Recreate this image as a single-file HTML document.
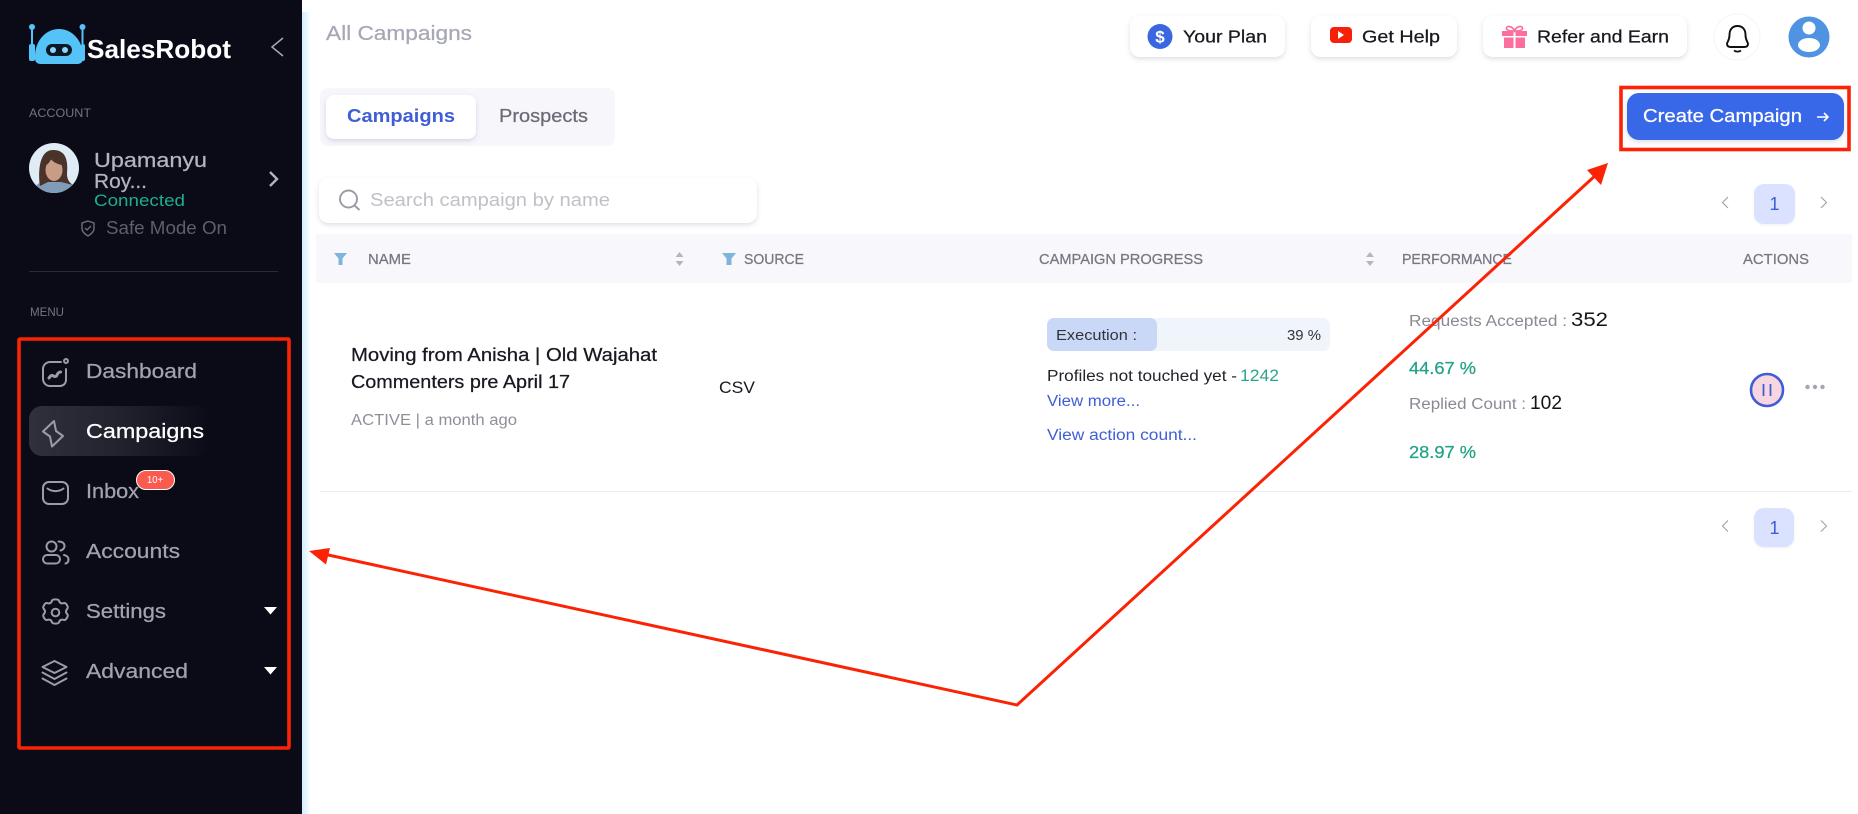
<!DOCTYPE html>
<html lang="en"><head><meta charset="utf-8"><title>SalesRobot - All Campaigns</title>
<style>
html,body{margin:0;padding:0;width:1858px;height:814px;overflow:hidden;background:#fff}
svg{display:block}
text{font-family:"Liberation Sans",sans-serif;white-space:pre}
.m{stroke:currentColor;stroke-width:.25px}
</style></head><body>
<svg xmlns="http://www.w3.org/2000/svg" width="1858" height="814" viewBox="0 0 1858 814">
<defs>
<linearGradient id="strip" x1="0" x2="1" y1="0" y2="0"><stop offset="0" stop-color="#d3eeff"/><stop offset="1" stop-color="#fff"/></linearGradient>
<linearGradient id="act" x1="0" x2="1" y1="0" y2="0"><stop offset="0" stop-color="#30303d"/><stop offset=".45" stop-color="#24242f"/><stop offset="1" stop-color="#0b0b18"/></linearGradient>
<filter id="sh" x="-10%" y="-30%" width="120%" height="170%"><feDropShadow dx="0" dy="2" stdDeviation="2.5" flood-color="#5a5a80" flood-opacity=".2"/></filter>
<filter id="sh2" x="-10%" y="-30%" width="120%" height="170%"><feDropShadow dx="0" dy="1" stdDeviation="1" flood-color="#7a7aa0" flood-opacity=".12"/></filter>
<clipPath id="av"><circle cx="54" cy="168" r="25"/></clipPath>
</defs>
<rect width="1858" height="814" fill="#fff"/>
<rect x="302" y="12" width="9" height="802" fill="url(#strip)"/>
<rect width="302" height="814" fill="#0b0b18"/>

<!-- logo -->
<g fill="#55c3f7">
<path d="M35 56a24 27 0 0 1 48 0v3a5 5 0 0 1-5 5H40a5 5 0 0 1-5-5z"/>
<rect x="29" y="44" width="6" height="17" rx="2"/><rect x="31" y="27" width="2" height="20"/><circle cx="32" cy="27" r="3"/>
<rect x="81" y="44" width="4" height="17" rx="2"/><rect x="81.500" y="27" width="2" height="20"/><circle cx="82.500" cy="27" r="3"/>
</g>
<rect x="46" y="44" width="26" height="12" rx="6" fill="#0d1826"/>
<circle cx="53" cy="50" r="3" fill="#8ad7fb"/><circle cx="65" cy="50" r="3" fill="#8ad7fb"/>
<text x="87" y="58" font-size="26" font-weight="700" fill="#fff" textLength="144" lengthAdjust="spacingAndGlyphs">SalesRobot</text>
<path d="M283 38l-11 9 11 9" fill="none" stroke="#a8a8b2" stroke-width="1.500"/>

<text x="29" y="117" font-size="12" fill="#74747f" textLength="62" lengthAdjust="spacingAndGlyphs">ACCOUNT</text>
<!-- avatar -->
<g clip-path="url(#av)">
<rect x="29" y="143" width="50" height="50" fill="#dfecf6"/>
<path d="M33 193c2-11 11-13 21-13s19 2 23 13z" fill="#7f9db8"/>
<path d="M40 186c-2-14-1-36 13-36s15 12 14 24c0 6 3 9 6 11l-12-3H48z" fill="#4a3328"/>
<ellipse cx="54" cy="170" rx="8.500" ry="11" fill="#c99c86"/>
<path d="M45 166c0-8 5-12 10-11 5 1 7 5 7 10-5-1-9-3-11-6-1 3-3 5-6 7z" fill="#4a3328"/>
</g>
<text class="m" x="94" y="167" font-size="20" fill="#b4b4be" color="#b4b4be" textLength="113" lengthAdjust="spacingAndGlyphs">Upamanyu</text>
<text class="m" x="94" y="188" font-size="20" fill="#b4b4be" color="#b4b4be" textLength="53" lengthAdjust="spacingAndGlyphs">Roy...</text>
<text x="94" y="206" font-size="17" fill="#1fae8c" textLength="91" lengthAdjust="spacingAndGlyphs">Connected</text>
<path d="M270 172l7 7-7 7" fill="none" stroke="#b4b4be" stroke-width="2.400"/>
<path d="M88 221l6 2v5c0 4-3 6-6 8-3-2-6-4-6-8v-5z" fill="none" stroke="#6f6f7b" stroke-width="1.400"/>
<path d="M85 228l2 2 4-4" fill="none" stroke="#6f6f7b" stroke-width="1.300"/>
<text x="106" y="234" font-size="18" fill="#5f5f6b" textLength="121" lengthAdjust="spacingAndGlyphs">Safe Mode On</text>
<rect x="29" y="271" width="249" height="1" fill="#2a2a38"/>
<text x="30" y="316" font-size="12" fill="#74747f" textLength="34" lengthAdjust="spacingAndGlyphs">MENU</text>

<!-- menu -->
<rect x="29" y="406" width="181" height="50" rx="13" fill="url(#act)"/>
<g fill="none" stroke="#9c9ca8" stroke-width="2" stroke-linecap="round" stroke-linejoin="round">
<path d="M61 362H50a7 7 0 0 0-7 7v10a7 7 0 0 0 7 7h10a6 6 0 0 0 6-6v-11"/><circle cx="66" cy="361" r="2"/>
<path d="M49 378c2-3 3-3 4.500-2s3 .5 3.500-1 2-3 3.500-3" stroke-width="3"/>
<path d="M54 421L43 431.500 50 436.500 52 446.500 63 436 56 431z"/>
<rect x="43" y="482" width="25" height="22" rx="6"/><path d="M47.500 488.500c4.500 3.500 11.500 3.500 16 0"/>
<circle cx="51.500" cy="546.500" r="5"/><path d="M58.500 541.500c4 0 6 2 6 4.500s-2 4-4 4.500"/><rect x="43" y="555" width="17" height="8.500" rx="4.200"/><path d="M64 555c3 .5 4.500 2.500 4.500 4.500 0 2-1 3.500-3 4"/>
<circle cx="55.500" cy="612.500" r="3.800"/><path d="M52 600.500c1-1.500 6-1.500 7 0 .5 2.500 2.500 3.500 5 2.500 2-.5 4.500 4 3.500 5.500-2 2-2 4 0 6 1 1.500-1.500 6-3.500 5.500-2.500-1-4.500 0-5 2.500-1 1.500-6 1.500-7 0-.5-2.500-2.500-3.500-5-2.500-2 .5-4.500-4-3.500-5.500 2-2 2-4 0-6-1-1.500 1.500-6 3.500-5.500 2.500 1 4.500 0 5-2.500z"/>
<path d="M54.500 661l12 6-12 6-12-6z"/><path d="M42.500 672.500l12 6.500 12-6.500"/><path d="M42.500 678.500l12 6.500 12-6.500"/>
</g>
<text class="m" x="86" y="378" font-size="20" fill="#a3a3af" color="#a3a3af" textLength="111" lengthAdjust="spacingAndGlyphs">Dashboard</text>
<text class="m" x="86" y="438" font-size="20" fill="#fff" color="#fff" textLength="118" lengthAdjust="spacingAndGlyphs">Campaigns</text>
<text class="m" x="86" y="498" font-size="20" fill="#a3a3af" color="#a3a3af" textLength="53" lengthAdjust="spacingAndGlyphs">Inbox</text>
<rect x="136.500" y="470.500" width="38" height="19" rx="9.500" fill="#fb5a4e" stroke="#fff" stroke-width="1"/>
<text x="147" y="483" font-size="10" fill="#fff" textLength="16" lengthAdjust="spacingAndGlyphs">10+</text>
<text class="m" x="86" y="558" font-size="20" fill="#a3a3af" color="#a3a3af" textLength="94" lengthAdjust="spacingAndGlyphs">Accounts</text>
<text class="m" x="86" y="618" font-size="20" fill="#a3a3af" color="#a3a3af" textLength="80" lengthAdjust="spacingAndGlyphs">Settings</text>
<text class="m" x="86" y="678" font-size="20" fill="#a3a3af" color="#a3a3af" textLength="102" lengthAdjust="spacingAndGlyphs">Advanced</text>
<path d="M264 607h13l-6.500 7.500z" fill="#fff"/><path d="M264 667h13l-6.500 7.500z" fill="#fff"/>

<!-- top header -->
<text class="m" x="326" y="40" font-size="20" fill="#a6a8b6" color="#a6a8b6" textLength="146" lengthAdjust="spacingAndGlyphs">All Campaigns</text>

<rect x="1130" y="16" width="155" height="41" rx="10" fill="#fff" filter="url(#sh)"/>
<circle cx="1160" cy="36.500" r="12.500" fill="#3a66df"/>
<text x="1160" y="42.500" font-size="17" font-weight="700" fill="#fff" text-anchor="middle">$</text>
<text class="m" x="1183" y="42.500" font-size="17.500" fill="#18181f" color="#18181f" textLength="84" lengthAdjust="spacingAndGlyphs">Your Plan</text>

<rect x="1311" y="16" width="146" height="41" rx="10" fill="#fff" filter="url(#sh)"/>
<rect x="1330" y="27" width="22" height="16" rx="4" fill="#f7200a"/><path d="M1338 31l6 4-6 4z" fill="#fff"/>
<text class="m" x="1362" y="42.500" font-size="17.500" fill="#18181f" color="#18181f" textLength="78" lengthAdjust="spacingAndGlyphs">Get Help</text>

<rect x="1483" y="16" width="204" height="41" rx="10" fill="#fff" filter="url(#sh)"/>
<g fill="#fb6f9f"><rect x="1502" y="31" width="25" height="5"/><rect x="1504" y="37.500" width="21" height="10.500"/></g>
<rect x="1513.500" y="31" width="2" height="17" fill="#fff"/>
<path d="M1514.500 31c-2-5-8-6-8-2.500 0 2 4 2.500 8 2.500 4 0 8-.5 8-2.500 0-3.500-6-2.500-8 2.500z" fill="none" stroke="#fb6f9f" stroke-width="1.600"/>
<text class="m" x="1537" y="42.500" font-size="17.500" fill="#18181f" color="#18181f" textLength="132" lengthAdjust="spacingAndGlyphs">Refer and Earn</text>

<circle cx="1737" cy="37" r="23" fill="#fff" stroke="#f5f5f8"/>
<path d="M1737.500 26c-5.500 0-8 4-8 9 0 5-2 6.500-2.500 8.500 0 2.500 1.500 3.500 3.500 3.500h14c2 0 3.500-1 3.500-3.500-.5-2-2.500-3.500-2.500-8.500 0-5-2.500-9-8-9z" fill="none" stroke="#111" stroke-width="1.900"/>
<path d="M1734 50.500c2 1.500 5 1.500 7 0" fill="none" stroke="#111" stroke-width="1.800"/>

<circle cx="1809" cy="37" r="20.500" fill="#4f93e2"/>
<circle cx="1809" cy="28" r="6.500" fill="#fff"/><ellipse cx="1809" cy="45" rx="11" ry="7" fill="#fff"/>

<!-- tabs -->
<rect x="320" y="88" width="295" height="58" rx="8" fill="#f6f6fb"/>
<rect x="326" y="95" width="150" height="44" rx="8" fill="#fff" filter="url(#sh)"/>
<text x="347" y="122" font-size="18" font-weight="700" fill="#3f5ed5" textLength="108" lengthAdjust="spacingAndGlyphs">Campaigns</text>
<text class="m" x="499" y="122" font-size="18" fill="#6b6b76" color="#6b6b76" textLength="89" lengthAdjust="spacingAndGlyphs">Prospects</text>

<rect x="1627" y="93" width="217" height="47" rx="12" fill="#3767e8" filter="url(#sh)"/>
<text class="m" x="1643" y="122" font-size="18" fill="#fff" color="#fff" textLength="159" lengthAdjust="spacingAndGlyphs">Create Campaign</text>
<path d="M1817 117h11m-4-4l4 4-4 4" fill="none" stroke="#fff" stroke-width="1.600"/>

<!-- search -->
<rect x="319" y="178" width="438" height="45" rx="10" fill="#fff" filter="url(#sh)"/>
<circle cx="348.500" cy="199" r="8.500" fill="none" stroke="#9a9aa3" stroke-width="1.900"/>
<path d="M354.500 205.500l5 4.500" stroke="#9a9aa3" stroke-width="1.900"/>
<text x="370" y="206" font-size="18" fill="#c0c0c8" textLength="240" lengthAdjust="spacingAndGlyphs">Search campaign by name</text>

<!-- pagination top -->
<path d="M1728 197l-5.500 5.500 5.500 5.500" fill="none" stroke="#9a9aa3" stroke-width="1"/>
<rect x="1754" y="184" width="41" height="40" rx="10" fill="#dbe2ff" filter="url(#sh2)"/>
<text x="1774.500" y="210" font-size="18" fill="#3f5ed5" text-anchor="middle">1</text>
<path d="M1821 197l5.500 5.500-5.500 5.500" fill="none" stroke="#9a9aa3" stroke-width="1"/>

<!-- table head -->
<rect x="316" y="234" width="1536" height="49" fill="#f8f8fc"/>
<path d="M334 253h13l-4.500 5.500v6.500h-4v-6.500z" fill="#7fb5dd"/>
<text class="m" x="368" y="264" font-size="14.500" fill="#777782" color="#777782" textLength="43" lengthAdjust="spacingAndGlyphs">NAME</text>
<path d="M679.500 252l4 5h-8zM679.500 266l4-5h-8z" fill="#b5b5bf"/>
<path d="M722 253h14l-4.500 5.500v6.500h-5v-6.500z" fill="#7fb5dd"/>
<text class="m" x="744" y="264" font-size="14.500" fill="#777782" color="#777782" textLength="60" lengthAdjust="spacingAndGlyphs">SOURCE</text>
<text class="m" x="1039" y="264" font-size="14.500" fill="#777782" color="#777782" textLength="164" lengthAdjust="spacingAndGlyphs">CAMPAIGN PROGRESS</text>
<path d="M1370 252l4 5h-8zM1370 266l4-5h-8z" fill="#b5b5bf"/>
<text class="m" x="1402" y="264" font-size="14.500" fill="#777782" color="#777782" textLength="110" lengthAdjust="spacingAndGlyphs">PERFORMANCE</text>
<text class="m" x="1743" y="264" font-size="14.500" fill="#777782" color="#777782" textLength="66" lengthAdjust="spacingAndGlyphs">ACTIONS</text>

<!-- row -->
<text class="m" x="351" y="361" font-size="18" fill="#191922" color="#191922" textLength="306" lengthAdjust="spacingAndGlyphs">Moving from Anisha | Old Wajahat</text>
<text class="m" x="351" y="388" font-size="18" fill="#191922" color="#191922" textLength="219" lengthAdjust="spacingAndGlyphs">Commenters pre April 17</text>
<text x="351" y="425" font-size="15.500" fill="#8f8f99" textLength="166" lengthAdjust="spacingAndGlyphs">ACTIVE | a month ago</text>
<text x="719" y="393" font-size="17" fill="#191922" textLength="36" lengthAdjust="spacingAndGlyphs">CSV</text>

<rect x="1047" y="318" width="283" height="33" rx="7" fill="#f0f4fb"/>
<rect x="1047" y="318" width="110" height="33" rx="7" fill="#c9d8f7"/>
<text x="1056" y="340" font-size="15" fill="#33333c" textLength="81" lengthAdjust="spacingAndGlyphs">Execution :</text>
<text x="1287" y="340" font-size="15" fill="#33333c" textLength="34" lengthAdjust="spacingAndGlyphs">39 %</text>
<text x="1047" y="381" font-size="15.500" fill="#22222a" textLength="190" lengthAdjust="spacingAndGlyphs">Profiles not touched yet -</text>
<text x="1240" y="381" font-size="17" fill="#2aa58c" textLength="39" lengthAdjust="spacingAndGlyphs">1242</text>
<text x="1047" y="406" font-size="15.500" fill="#3f5ed5" textLength="93" lengthAdjust="spacingAndGlyphs">View more...</text>
<text x="1047" y="440" font-size="15.500" fill="#3f5ed5" textLength="150" lengthAdjust="spacingAndGlyphs">View action count...</text>

<text x="1409" y="326" font-size="15.500" fill="#8a8a95" textLength="158" lengthAdjust="spacingAndGlyphs">Requests Accepted :</text>
<text x="1571" y="326" font-size="19" fill="#14141a" textLength="37" lengthAdjust="spacingAndGlyphs">352</text>
<text class="m" x="1409" y="374" font-size="17.500" fill="#24a287" color="#24a287" textLength="67" lengthAdjust="spacingAndGlyphs">44.67 %</text>
<text x="1409" y="409" font-size="15.500" fill="#8a8a95" textLength="117" lengthAdjust="spacingAndGlyphs">Replied Count :</text>
<text x="1530" y="409" font-size="19" fill="#14141a" textLength="32" lengthAdjust="spacingAndGlyphs">102</text>
<text class="m" x="1409" y="458" font-size="17.500" fill="#24a287" color="#24a287" textLength="67" lengthAdjust="spacingAndGlyphs">28.97 %</text>

<circle cx="1767" cy="390" r="16" fill="#f8d6e0" stroke="#3f5ed5" stroke-width="2.600"/>
<path d="M1763.500 384v12M1770.500 384v12" stroke="#3f5ed5" stroke-width="1.800"/>
<g fill="#a5a5af"><circle cx="1807.500" cy="387" r="2.200"/><circle cx="1815" cy="387" r="2.200"/><circle cx="1822.500" cy="387" r="2.200"/></g>

<rect x="320" y="491" width="1532" height="1" fill="#ececf0"/>

<!-- pagination bottom -->
<path d="M1728 520.500l-5.500 5.500 5.500 5.500" fill="none" stroke="#9a9aa3" stroke-width="1"/>
<rect x="1754" y="508" width="40" height="39" rx="10" fill="#dbe2ff" filter="url(#sh2)"/>
<text x="1774.500" y="534" font-size="18" fill="#3f5ed5" text-anchor="middle">1</text>
<path d="M1821 520.500l5.500 5.500-5.500 5.500" fill="none" stroke="#9a9aa3" stroke-width="1"/>

<!-- red annotations -->
<g fill="none" stroke="#fb2205">
<rect x="19" y="339" width="270" height="409" stroke-width="3.600" rx="1"/>
<rect x="1621" y="87.500" width="228" height="62" stroke-width="3.600"/>
<path d="M326 554.500L1017 705 1597 174" stroke-width="3" stroke-linejoin="miter"/>
</g>
<path d="M309 551l21-3-4 16.500z" fill="#fb2205"/>
<path d="M1608 163l-7 22-14-15z" fill="#fb2205"/>
</svg>
</body></html>
